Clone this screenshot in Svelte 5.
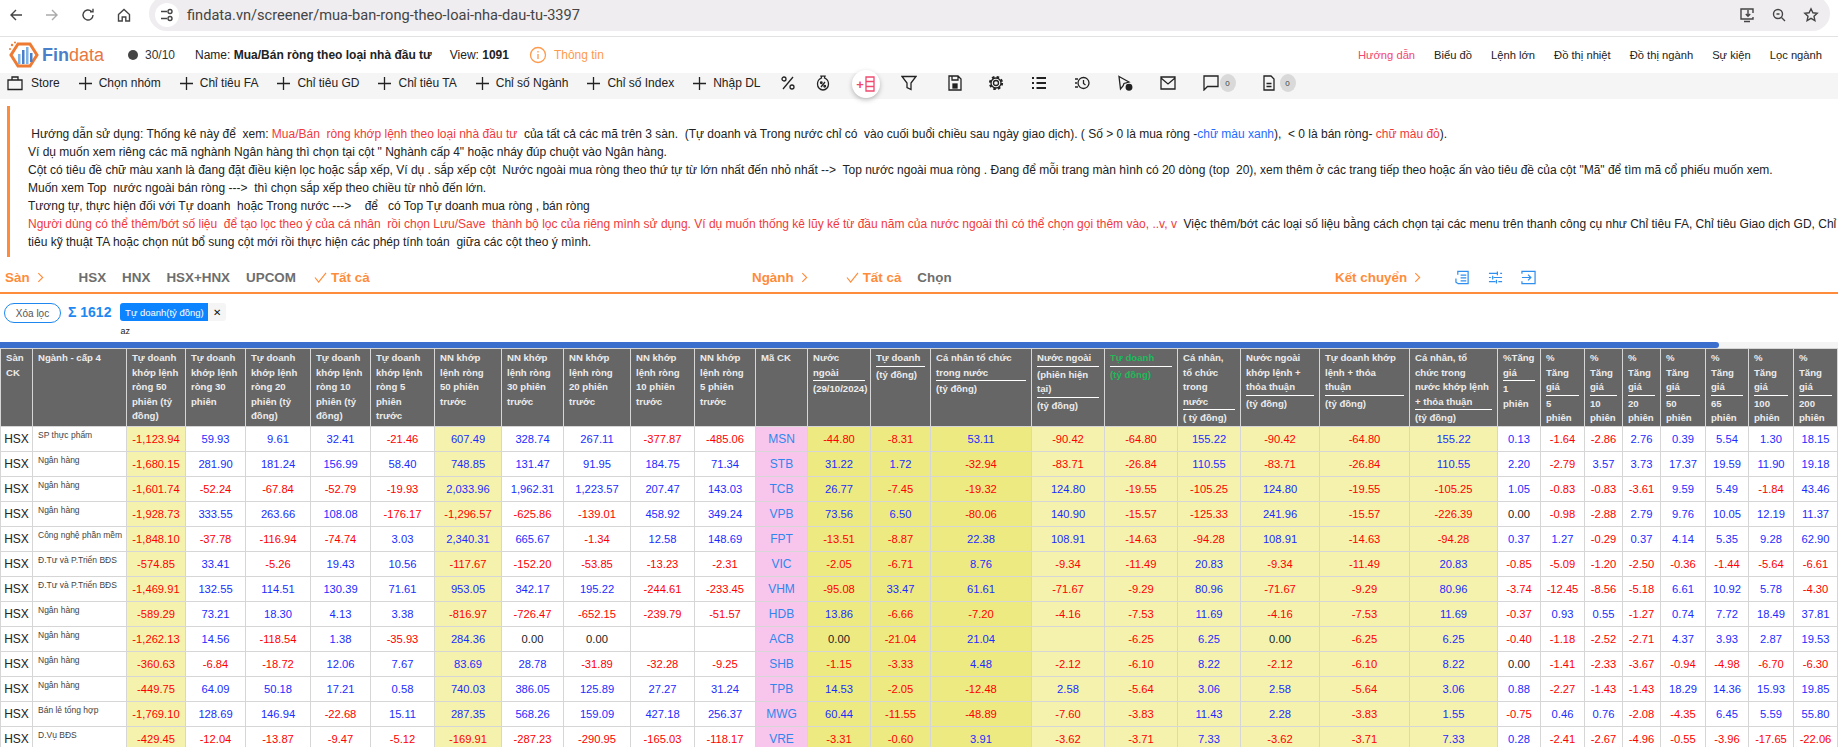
<script lang="ts">
  const edges = [0, 32, 126, 185, 245, 310, 370, 434, 501, 563, 630, 694, 755, 807, 870, 930, 1031, 1104, 1177, 1240, 1319, 1409, 1497, 1540, 1584, 1622, 1660, 1705, 1748, 1793, 1837, 1838];
  const widths = edges.slice(1).map((e, i) => e - edges[i]);

  // each header is a list of blocks, blocks are underlined except the last
  const tuDoanh = (n, tail) => [`Tự doanh\nkhớp lệnh\nròng ${n}\n${tail}`];
  const nnKhop = (n) => [`NN khớp\nlệnh ròng\n${n} phiên\ntrước`];
  const tang = (n) => [`%\nTăng\ngiá`, `${n}\nphiên`];
  const heads = [
    ["Sàn\nCK"],
    ["Ngành - cấp 4"],
    tuDoanh(50, "phiên (tỷ\nđồng)"),
    tuDoanh(30, "phiên"),
    tuDoanh(20, "phiên (tỷ\nđồng)"),
    tuDoanh(10, "phiên (tỷ\nđồng)"),
    tuDoanh(5, "phiên\ntrước"),
    nnKhop(50),
    nnKhop(30),
    nnKhop(20),
    nnKhop(10),
    nnKhop(5),
    ["Mã CK"],
    ["Nước\nngoài", "(29/10/2024)"],
    ["Tự doanh", "(tỷ đồng)"],
    ["Cá nhân tổ chức\ntrong nước", "(tỷ đồng)"],
    ["Nước ngoài", "(phiên hiện\ntại)", "(tỷ đồng)"],
    ["Tự doanh", "(tỷ đồng)"],
    ["Cá nhân,\ntổ chức\ntrong\nnước", "( tỷ đồng)"],
    ["Nước ngoài\nkhớp lệnh +\nthỏa thuận", "(tỷ đồng)"],
    ["Tự doanh khớp\nlệnh + thỏa\nthuận", "(tỷ đồng)"],
    ["Cá nhân, tổ\nchức trong\nnước khớp lệnh\n+ thỏa thuận", "(tỷ đồng)"],
    ["%Tăng\ngiá", "1\nphiên"],
    tang(5),
    tang(10),
    tang(20),
    tang(50),
    tang(65),
    tang(100),
    tang(200),
    [""],
  ];

  const rows = [
    ["SP thực phẩm", "-1,123.94 59.93 9.61 32.41 -21.46 607.49 328.74 267.11 -377.87 -485.06 MSN -44.80 -8.31 53.11 -90.42 -64.80 155.22 -90.42 -64.80 155.22 0.13 -1.64 -2.86 2.76 0.39 5.54 1.30 18.15"],
    ["Ngân hàng", "-1,680.15 281.90 181.24 156.99 58.40 748.85 131.47 91.95 184.75 71.34 STB 31.22 1.72 -32.94 -83.71 -26.84 110.55 -83.71 -26.84 110.55 2.20 -2.79 3.57 3.73 17.37 19.59 11.90 19.18"],
    ["Ngân hàng", "-1,601.74 -52.24 -67.84 -52.79 -19.93 2,033.96 1,962.31 1,223.57 207.47 143.03 TCB 26.77 -7.45 -19.32 124.80 -19.55 -105.25 124.80 -19.55 -105.25 1.05 -0.83 -0.83 -3.61 9.59 5.49 -1.84 43.46"],
    ["Ngân hàng", "-1,928.73 333.55 263.66 108.08 -176.17 -1,296.57 -625.86 -139.01 458.92 349.24 VPB 73.56 6.50 -80.06 140.90 -15.57 -125.33 241.96 -15.57 -226.39 0.00 -0.98 -2.88 2.79 9.76 10.05 12.19 11.37"],
    ["Công nghệ phần mềm", "-1,848.10 -37.78 -116.94 -74.74 3.03 2,340.31 665.67 -1.34 12.58 148.69 FPT -13.51 -8.87 22.38 108.91 -14.63 -94.28 108.91 -14.63 -94.28 0.37 1.27 -0.29 0.37 4.14 5.35 9.28 62.90"],
    ["Đ.Tư và P.Triển BĐS", "-574.85 33.41 -5.26 19.43 10.56 -117.67 -152.20 -53.85 -13.23 -2.31 VIC -2.05 -6.71 8.76 -9.34 -11.49 20.83 -9.34 -11.49 20.83 -0.85 -5.09 -1.20 -2.50 -0.36 -1.44 -5.64 -6.61"],
    ["Đ.Tư và P.Triển BĐS", "-1,469.91 132.55 114.51 130.39 71.61 953.05 342.17 195.22 -244.61 -233.45 VHM -95.08 33.47 61.61 -71.67 -9.29 80.96 -71.67 -9.29 80.96 -3.74 -12.45 -8.56 -5.18 6.61 10.92 5.78 -4.30"],
    ["Ngân hàng", "-589.29 73.21 18.30 4.13 3.38 -816.97 -726.47 -652.15 -239.79 -51.57 HDB 13.86 -6.66 -7.20 -4.16 -7.53 11.69 -4.16 -7.53 11.69 -0.37 0.93 0.55 -1.27 0.74 7.72 18.49 37.81"],
    ["Ngân hàng", "-1,262.13 14.56 -118.54 1.38 -35.93 284.36 0.00 0.00 _ _ ACB 0.00 -21.04 21.04 _ -6.25 6.25 0.00 -6.25 6.25 -0.40 -1.18 -2.52 -2.71 4.37 3.93 2.87 19.53"],
    ["Ngân hàng", "-360.63 -6.84 -18.72 12.06 7.67 83.69 28.78 -31.89 -32.28 -9.25 SHB -1.15 -3.33 4.48 -2.12 -6.10 8.22 -2.12 -6.10 8.22 0.00 -1.41 -2.33 -3.67 -0.94 -4.98 -6.70 -6.30"],
    ["Ngân hàng", "-449.75 64.09 50.18 17.21 0.58 740.03 386.05 125.89 27.27 31.24 TPB 14.53 -2.05 -12.48 2.58 -5.64 3.06 2.58 -5.64 3.06 0.88 -2.27 -1.43 -1.43 18.29 14.36 15.93 19.85"],
    ["Bán lẻ tổng hợp", "-1,769.10 128.69 146.94 -22.68 15.11 287.35 568.26 159.09 427.18 256.37 MWG 60.44 -11.55 -48.89 -7.60 -3.83 11.43 2.28 -3.83 1.55 -0.75 0.46 0.76 -2.08 -4.35 6.45 5.59 55.80"],
    ["D.Vụ BĐS", "-429.45 -12.04 -13.87 -9.47 -5.12 -169.91 -287.23 -290.95 -165.03 -118.17 VRE -3.31 -0.60 3.91 -3.62 -3.71 7.33 -3.62 -3.71 7.33 0.28 -2.41 -2.67 -4.96 -0.55 -3.96 -17.65 -22.06"],
  ];

  // index inside the value list -> background class
  function bg(i) {
    if (i === 0 || i === 5) return "light";
    if (i === 10) return "pink";
    if (i >= 11 && i <= 13) return "dark";
    if (i >= 14 && i <= 19) return "light";
    return "";
  }
  function tone(v) {
    if (v === "_") return "";
    if (v.startsWith("-")) return "neg";
    if (v === "0.00") return "zero";
    return "pos";
  }

  const menus = ["Chọn nhóm", "Chỉ tiêu FA", "Chỉ tiêu GD", "Chỉ tiêu TA", "Chỉ số Ngành", "Chỉ số Index", "Nhập DL"];
  const nav = ["Biểu đồ", "Lệnh lớn", "Đồ thị nhiệt", "Đồ thị ngành", "Sự kiện", "Lọc ngành"];
</script>

{#snippet check()}
  <svg class="check" viewBox="0 0 14 12"><path d="M1 6l4 5 8-10" /></svg>
{/snippet}

{#snippet chevron()}
  <svg class="chev" viewBox="0 0 8 12"><path d="M1.5 1l5 5-5 5" /></svg>
{/snippet}

<div class="page">
  <header class="chrome">
    <svg class="cicon" viewBox="0 0 16 16"><path d="M14 8H3M8 3L3 8l5 5" /></svg>
    <svg class="cicon off" viewBox="0 0 16 16"><path d="M2 8h11M8 3l5 5-5 5" /></svg>
    <svg class="cicon" viewBox="0 0 16 16"><path d="M13 8a5 5 0 1 1-1.6-3.7M13 1.8v3h-3" /></svg>
    <svg class="cicon" viewBox="0 0 16 16"><path d="M2.5 7.5L8 2.5l5.500 5V14H9.800V10H6.200v4H2.500z" /></svg>
    <div class="omni">
      <span class="tune">
        <svg class="cicon" viewBox="0 0 16 16"><path d="M2 4.500h6M2 11.500h6" /><circle cx="11" cy="4.500" r="2" /><circle cx="11" cy="11.500" r="2" /></svg>
      </span>
      <span class="url">findata.vn/screener/mua-ban-rong-theo-loai-nha-dau-tu-3397</span>
      <span class="omni-right">
        <svg class="cicon" viewBox="0 0 16 16"><path d="M14 6V2H2v10h12V10M5 14.500h6M9 3v6M6.800 7L9 9.200 11.200 7" /></svg>
        <svg class="cicon" viewBox="0 0 16 16"><circle cx="7" cy="7" r="4.500" /><path d="M10.500 10.500L14 14M5.500 7h3" /></svg>
        <svg class="cicon" viewBox="0 0 16 16"><path d="M8 1.800l1.900 4 4.300.5-3.200 3 .9 4.300L8 11.400l-3.900 2.200.9-4.300-3.200-3 4.300-.5z" /></svg>
      </span>
    </div>
  </header>

  <div class="topbar">
    <div class="logo">
      <svg viewBox="0 0 32 28" width="32" height="28">
        <path d="M10 3h12l7 11-7 11H10L3 14z" stroke="#ee7b33" stroke-width="3" />
        <g stroke="none">
          <rect x="10" y="13" width="2.500" height="10" fill="#7fb2e5" />
          <rect x="14" y="9" width="2.500" height="14" fill="#4a7fc9" />
          <rect x="18" y="6" width="2.500" height="17" fill="#7fb2e5" />
          <rect x="22" y="12" width="2.500" height="9" fill="#4a7fc9" />
          <circle cx="4" cy="4" r="1.200" fill="#ee7b33" />
          <circle cx="7" cy="1.500" r="1" fill="#ee7b33" />
          <circle cx="2" cy="8" r="1" fill="#ee7b33" />
        </g>
      </svg>
      <span class="brand"><b>Fin</b><i>data</i></span>
    </div>
    <span class="dot"></span>
    <span class="count">30/10</span>
    <span class="name">Name: <b>Mua/Bán ròng theo loại nhà đầu tư</b></span>
    <span class="view">View: <b>1091</b></span>
    <svg class="info" viewBox="0 0 18 18"><circle cx="9" cy="9" r="7.500" /><path d="M9 8v5M9 5v1.500" /></svg>
    <span class="info-text">Thông tin</span>
    <nav class="nav">
      <span class="guide">Hướng dẫn</span>
      {#each nav as item}
        <span>{item}</span>
      {/each}
    </nav>
  </div>

  <div class="toolbar">
    <span class="tool store">
      <svg class="ticon" viewBox="0 0 16 16"><path d="M1 5h14v9.500H1zM5 5V2h6v3" /></svg>
      Store
    </span>
    {#each menus as item}
      <span class="tool">
        <svg class="plus" viewBox="0 0 13 13"><path d="M6.500 0v13M0 6.500h13" /></svg>
        {item}
      </span>
    {/each}
    <svg class="ticon" viewBox="0 0 16 16"><path d="M13 2L3 14" /><circle cx="4" cy="4" r="2" /><circle cx="12" cy="12" r="2" /></svg>
    <svg class="ticon" viewBox="0 0 16 16"><path d="M6 1.200h4L9.500 3C12 4 13.500 6.500 13.500 9c0 3.500-2.500 6-5.500 6s-5.500-2.500-5.500-6c0-2.500 1.500-5 4-6zM10 7l-4 5" /><circle cx="6.300" cy="7.800" r=".8" /><circle cx="9.700" cy="11.200" r=".8" /></svg>
    <span class="addcol">
      <b>+</b>
      <svg viewBox="0 0 10 16" width="10" height="16"><path d="M1 1h8v14H1zM1 5.500h8M1 10.500h8" /></svg>
    </span>
    <svg class="ticon" viewBox="0 0 16 16"><path d="M1 1.500h14L10 8v6.500L6 12.500V8z" /></svg>
    <div class="icons">
      <svg class="ticon save" viewBox="0 0 16 16"><path d="M2 1h9l3 3v11H2zM5 1v4h6V1" /><rect x="6" y="9" width="4" height="4" fill="#222" /></svg>
      <svg class="ticon" viewBox="0 0 16 16"><circle cx="8" cy="8" r="6" stroke-width="2.200" stroke-dasharray="2.500 2.200" /><circle cx="8" cy="8" r="5" /><circle cx="8" cy="8" r="2.500" /></svg>
      <svg class="ticon" viewBox="0 0 16 16"><path d="M5.500 3H15M5.500 8H15M5.500 13H15M1 3h2M1 8h2M1 13h2" stroke-width="1.800" /></svg>
      <svg class="ticon" viewBox="0 0 16 16"><circle cx="9.500" cy="8" r="5.500" /><path d="M9.500 5v3.500l2 1.500M1 4h3M1 8h2M1 12h3" /></svg>
      <svg class="ticon" viewBox="0 0 16 16"><path d="M2 1.500L12 7l-5 1.500-1 2.500L3.500 14z" /><circle cx="12" cy="12.300" r="2.800" fill="#222" /></svg>
      <svg class="ticon" viewBox="0 0 16 16"><path d="M1 2h14v12H1zM1 3l7 6 7-6" /></svg>
      <span class="withbadge">
        <svg class="ticon" viewBox="0 0 16 16"><path d="M1 1h14v10.500H4.500L1 15z" /></svg>
        <span class="badge">0</span>
      </span>
      <span class="withbadge doc">
        <svg class="ticon" viewBox="0 0 16 16"><path d="M3 1h7l3 3v11H3zM5.500 8.500h5M5.500 11.500h5" /></svg>
        <span class="badge">0</span>
      </span>
    </div>
  </div>

  <section class="guide-box">
    <p>&nbsp;Hướng dẫn sử dụng: Thống kê này để&nbsp; xem: <span class="red">Mua/Bán&nbsp; ròng khớp lệnh theo loại nhà đầu tư</span>&nbsp; của tất cả các mã trên 3 sàn.&nbsp; (Tự doanh và Trong nước chỉ có&nbsp; vào cuối buổi chiều sau ngày giao dịch). ( Số &gt; 0 là mua ròng -<span class="blue">chữ màu xanh</span>),&nbsp; &lt; 0 là bán ròng- <span class="red">chữ màu đỏ</span>).</p>
    <p>Ví dụ muốn xem riêng các mã nghành Ngân hàng thì chọn tại cột " Nghành cấp 4" hoặc nháy đúp chuột vào Ngân hàng.</p>
    <p>Cột có tiêu đề chữ màu xanh là đang đặt điều kiện lọc hoặc sắp xếp, Ví dụ . sắp xếp cột&nbsp; Nước ngoài mua ròng theo thứ tự từ lớn nhất đến nhỏ nhất --&gt;&nbsp; Top nước ngoài mua ròng . Đang để mỗi trang màn hình có 20 dòng (top&nbsp; 20), xem thêm ở các trang tiếp theo hoặc ấn vào tiêu đề của cột "Mã" để tìm mã cổ phiếu muốn xem.</p>
    <p>Muốn xem Top&nbsp; nước ngoài bán ròng ---&gt;&nbsp; thì chọn sắp xếp theo chiều từ nhỏ đến lớn.</p>
    <p>Tương tự, thực hiện đối với Tự doanh&nbsp; hoặc Trong nước ---&gt;&nbsp;&nbsp;&nbsp; để&nbsp;&nbsp; có Top Tự doanh mua ròng , bán ròng</p>
    <p><span class="red">Người dùng có thể thêm/bớt số liệu&nbsp; để tạo lọc theo ý của cá nhân&nbsp; rồi chọn Lưu/Save&nbsp; thành bộ lọc của riêng mình sử dụng. Ví dụ muốn thống kê lũy kế từ đầu năm của nước ngoài thì có thể chọn gọi thêm vào, ..v, v</span>&nbsp; Việc thêm/bớt các loại số liệu bằng cách chọn tại các menu trên thanh công cụ như Chỉ tiêu FA, Chỉ tiêu Giao dịch GD, Chỉ</p>
    <p>tiêu kỹ thuật TA hoặc chọn nút bổ sung cột mới rồi thực hiện các phép tính toán&nbsp; giữa các cột theo ý mình.</p>
  </section>

  <div class="filters">
    <div class="group">
      <span class="title">Sàn</span>{@render chevron()}
      <span class="opt first">HSX</span>
      <span class="opt">HNX</span>
      <span class="opt">HSX+HNX</span>
      <span class="opt">UPCOM</span>
      <span class="picked">{@render check()}Tất cả</span>
    </div>
    <div class="group">
      <span class="title">Ngành</span>{@render chevron()}
      <span class="picked wide">{@render check()}Tất cả</span>
      <span class="opt">Chọn</span>
    </div>
    <div class="group">
      <span class="title">Kết chuyển</span>{@render chevron()}
      <svg class="bicon one" viewBox="0 0 16 16"><path d="M3 5V1.500h11V14.500H3M6 5.500h6M6 8.500h6M6 11.500h6M1 9v4l2 1.500" /></svg>
      <svg class="bicon" viewBox="0 0 16 16"><path d="M1 3.500h9M13 3.500h2M1 8h2M6 8h9M1 12.500h7M11 12.500h4M10 1.500v4M5 6v4M9 10.500v4" /></svg>
      <svg class="bicon" viewBox="0 0 16 16"><path d="M1 4V1.500h14v13H1V12M1 8h9M7.500 5l3 3-3 3" /></svg>
    </div>
  </div>

  <div class="applied">
    <button class="clear">Xóa lọc</button>
    <span class="sum">Σ 1612</span>
    <div class="chipwrap">
      <div class="chip"><span class="chip-label">Tự doanh(tỷ đồng)</span><span class="chip-x">✕</span></div>
      <span class="az">az</span>
    </div>
  </div>

  <div class="scroll"><div class="thumb"></div></div>

  <table>
    <colgroup>
      {#each widths as w}
        <col style="width:{w}px" />
      {/each}
    </colgroup>
    <thead>
      <tr>
        {#each heads as blocks, c}
          <th class:green={c === 17}>
            {#each blocks as block}
              <div class="hblock">{block}</div>
            {/each}
          </th>
        {/each}
      </tr>
    </thead>
    <tbody>
      {#each rows as [sector, values]}
        <tr>
          <td class="exch">HSX</td>
          <td class="sector">{sector}</td>
          {#each values.split(" ") as v, i}
            <td class="{bg(i)} {tone(v)}" class:code={i === 10}>{v === "_" ? "" : v}</td>
          {/each}
          <td></td>
        </tr>
      {/each}
    </tbody>
  </table>
</div>

<style>
  :global(html), :global(body) {
    margin: 0;
    height: 747px;
    overflow: hidden;
    background: #fff;
  }
  .page {
    width: 1838px;
    height: 747px;
    overflow: hidden;
    font-family: "Liberation Sans", Arial, sans-serif;
    color: #222;
  }
  svg {
    fill: none;
    stroke: #222;
    stroke-width: 1.300;
    flex: none;
  }

  /* browser chrome */
  .chrome {
    height: 37px;
    box-sizing: border-box;
    border-bottom: 1px solid #e2e2e2;
    display: flex;
    align-items: flex-start;
    padding: 7px 8px 0 8px;
    gap: 20px;
  }
  .cicon {
    width: 16px;
    height: 16px;
    stroke: #444;
    stroke-width: 1.400;
  }
  .cicon.off {
    stroke: #aaa;
  }
  .omni {
    flex: 1;
    margin: -11px 0 0 -3px;
    height: 35px;
    background: #efedef;
    border-radius: 18px;
    display: flex;
    align-items: center;
    padding: 2px 6px 0 6px;
    box-sizing: border-box;
  }
  .tune {
    width: 24px;
    height: 24px;
    border-radius: 50%;
    background: #fff;
    display: flex;
    align-items: center;
    justify-content: center;
  }
  .url {
    margin-left: 8px;
    font-size: 14.600px;
    color: #444;
    font-family: Roboto, sans-serif;
  }
  .omni-right {
    margin-left: auto;
    margin-right: 5px;
    display: flex;
    gap: 16px;
  }

  /* site header */
  .topbar {
    height: 36px;
    display: flex;
    align-items: center;
    font-size: 12px;
    padding-left: 8px;
  }
  .logo {
    display: flex;
    align-items: center;
    gap: 2px;
    width: 100px;
  }
  .brand {
    font-size: 18px;
    line-height: 1;
  }
  .brand b {
    color: #4a7fc9;
  }
  .brand i {
    font-style: normal;
    color: #e8773f;
  }
  .dot {
    width: 10px;
    height: 10px;
    border-radius: 50%;
    background: #444;
    margin-left: 20px;
  }
  .count {
    margin-left: 7px;
    color: #333;
  }
  .name {
    margin-left: 20px;
  }
  .view {
    margin-left: 18px;
  }
  .info {
    width: 18px;
    height: 18px;
    stroke: #ff9a4d;
    margin-left: 20px;
  }
  .info-text {
    margin-left: 7px;
    color: #ff9a4d;
  }
  .nav {
    margin-left: auto;
    margin-right: 16px;
    display: flex;
    gap: 19px;
    font-size: 11.200px;
  }
  .guide {
    color: #f0486e;
  }

  /* tool row */
  .toolbar {
    height: 26px;
    box-sizing: border-box;
    padding: 0 0 6px 7px;
    background: #f5f5f5;
    display: flex;
    align-items: center;
    font-size: 12px;
    gap: 19px;
  }
  .tool {
    display: flex;
    align-items: center;
    gap: 7px;
  }
  .store {
    gap: 8px;
  }
  .ticon {
    width: 16px;
    height: 16px;
  }
  .plus {
    width: 13px;
    height: 13px;
  }
  .addcol {
    width: 28px;
    height: 28px;
    margin: 2px 2px 0;
    border-radius: 50%;
    background: #fff;
    box-shadow: 0 2px 5px rgba(0, 0, 0, 0.25);
    display: flex;
    align-items: center;
    justify-content: center;
    gap: 1px;
    color: #f0486e;
    font-size: 13px;
  }
  .addcol svg {
    stroke: #f0486e;
  }
  .icons {
    display: flex;
    align-items: center;
    gap: 27px;
    margin-left: 11px;
  }
  .save {
    margin-right: -2px;
  }
  .withbadge {
    display: flex;
    align-items: center;
    gap: 1px;
    margin-right: -2px;
  }
  .doc {
    gap: 3px;
  }
  .badge {
    width: 16px;
    height: 18px;
    border-radius: 50%;
    background: #d9d9d9;
    font-size: 8px;
    color: #444;
    display: flex;
    align-items: center;
    justify-content: center;
  }

  /* usage note */
  .guide-box {
    margin: 7px 0 0 7px;
    height: 151px;
    box-sizing: border-box;
    border-left: 3px solid #ff8c3a;
    padding: 19px 0 0 18px;
    white-space: nowrap;
    overflow: hidden;
    font-size: 12px;
    line-height: 18px;
    color: #222;
  }
  .guide-box p {
    margin: 0;
  }
  .red {
    color: #f03a3a;
  }
  .blue {
    color: #1f6bff;
  }

  /* filters */
  .filters {
    height: 29px;
    padding: 6px 0 0 5px;
    border-bottom: 2px solid #ff8c3a;
    display: grid;
    grid-template-columns: 747px 583px 1fr;
    font-size: 13.400px;
    font-weight: bold;
  }
  .group {
    display: flex;
    align-items: center;
  }
  .title {
    color: #ff8c3a;
  }
  .chev {
    width: 7px;
    height: 11px;
    stroke: #ff8c3a;
    margin-left: 7px;
  }
  .opt {
    color: #6e6e6e;
    margin-left: 16px;
  }
  .opt.first {
    margin-left: 35px;
  }
  .picked {
    color: #ff8c3a;
    display: flex;
    align-items: center;
    gap: 4px;
    margin-left: 18px;
  }
  .picked.wide {
    margin-left: 38px;
  }
  .check {
    width: 13px;
    height: 11px;
    stroke: #ff8c3a;
  }
  .bicon {
    width: 15px;
    height: 15px;
    stroke: #2f8fef;
    margin-left: 18px;
  }
  .bicon.one {
    margin-left: 34px;
  }

  /* applied filters */
  .applied {
    height: 48px;
    box-sizing: border-box;
    padding: 9px 0 0 4px;
    display: flex;
    align-items: flex-start;
  }
  .clear {
    width: 57px;
    height: 20px;
    padding: 0;
    border: 1px solid #1e88f0;
    border-radius: 10px;
    background: #fff;
    font: 10px "Liberation Sans", Arial, sans-serif;
    color: #555;
  }
  .sum {
    margin-left: 7px;
    font-size: 14px;
    font-weight: bold;
    color: #1e88f0;
    line-height: 18px;
  }
  .chipwrap {
    margin-left: 9px;
  }
  .chip {
    display: flex;
    height: 18px;
    align-items: stretch;
    font-size: 9.500px;
  }
  .chip-label {
    background: #0d84ff;
    color: #fff;
    width: 88px;
    border-radius: 3px 0 0 3px;
    display: flex;
    align-items: center;
    justify-content: center;
  }
  .chip-x {
    background: #f5f5f5;
    width: 18px;
    border-radius: 0 3px 3px 0;
    display: flex;
    align-items: center;
    justify-content: center;
    color: #111;
  }
  .az {
    display: block;
    font-size: 9px;
    margin-top: 5px;
    line-height: 11px;
  }

  .scroll {
    height: 6px;
    background: #f4f4f4;
  }
  .thumb {
    width: 1719px;
    height: 6px;
    border-radius: 0 3px 3px 0;
    background: #3a6fcd;
  }

  /* table */
  table {
    table-layout: fixed;
    border-collapse: collapse;
    width: 1838px;
  }
  th, td {
    border: 1px solid #d6d6d6;
    padding: 0;
    overflow: hidden;
  }
  th {
    height: 75px;
    background: #666;
    color: #ececec;
    vertical-align: top;
    text-align: left;
    padding: 2px 0 0 5px;
    font-size: 9.600px;
    font-weight: bold;
    line-height: 14.600px;
  }
  th.green {
    color: #1dbb5a;
  }
  .hblock {
    white-space: pre;
    margin-right: 5px;
  }
  .hblock:not(:last-child) {
    border-bottom: 1px solid #fff;
    margin-bottom: 1px;
  }
  td {
    height: 24px;
    text-align: center;
    font-size: 11.200px;
    white-space: nowrap;
  }
  td.exch {
    font-size: 12px;
    color: #222;
  }
  td.sector {
    height: 22px;
    font-size: 8.500px;
    color: #444;
    text-align: left;
    vertical-align: top;
    padding: 2px 0 0 5px;
    line-height: 12px;
  }
  .light {
    background: #f5f2ae;
  }
  .dark {
    background: #eeea82;
  }
  .pink {
    background: #f8c6ec;
  }
  .neg {
    color: #f00;
  }
  .pos {
    color: #1a2dff;
  }
  .zero {
    color: #222;
  }
  td.code {
    font-size: 12px;
    color: #2f86ee;
  }
</style>
